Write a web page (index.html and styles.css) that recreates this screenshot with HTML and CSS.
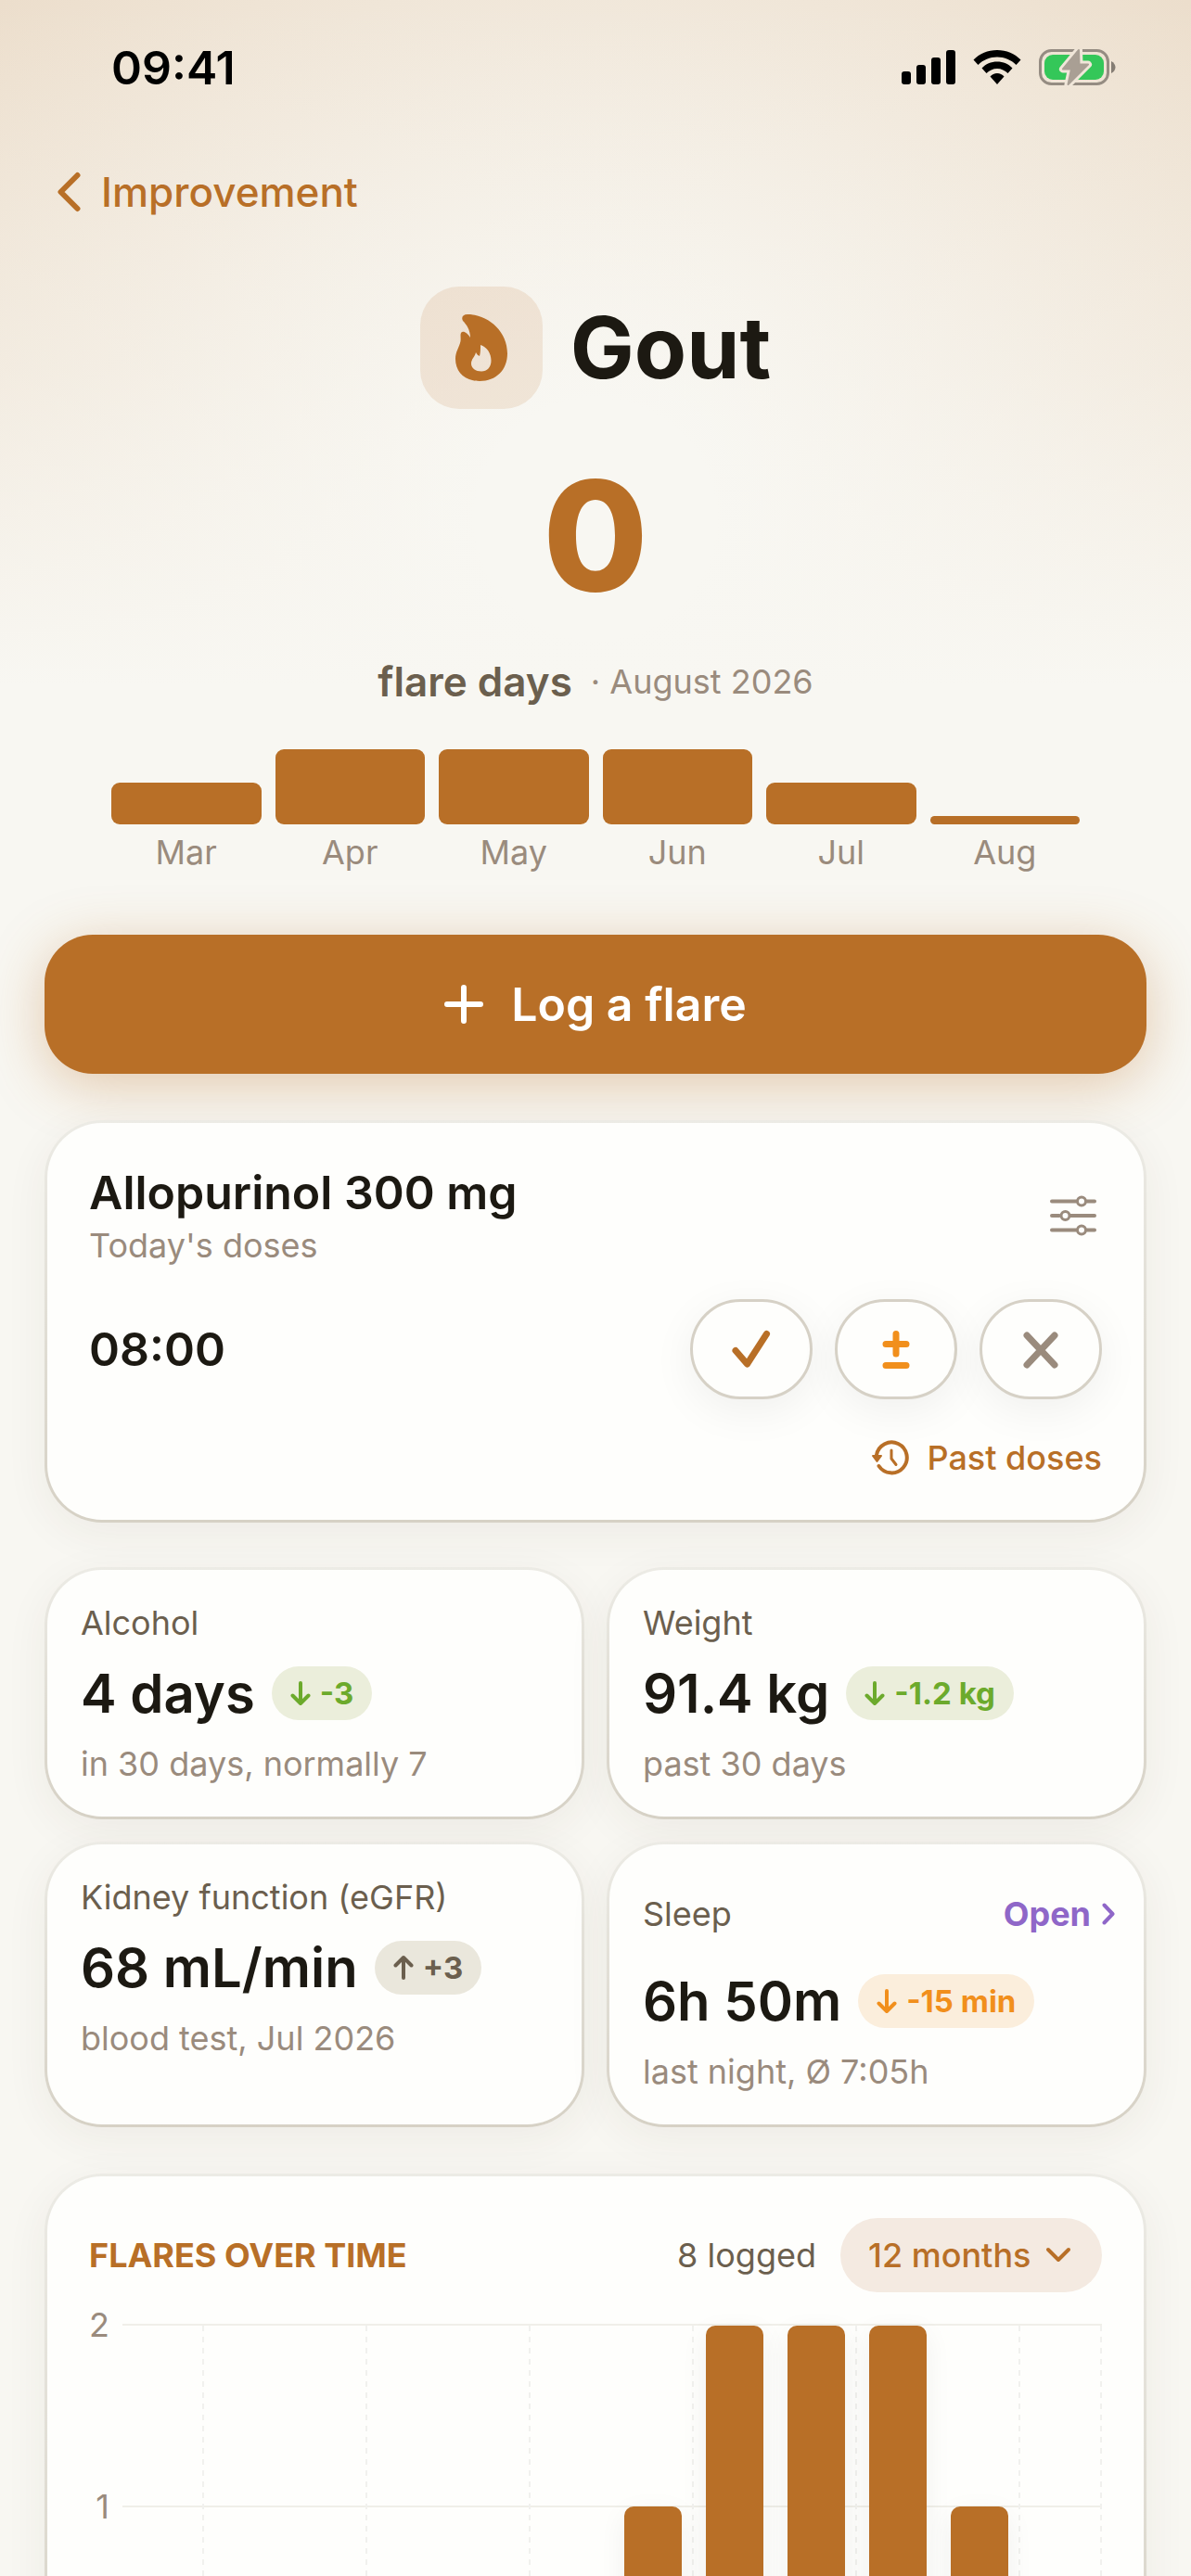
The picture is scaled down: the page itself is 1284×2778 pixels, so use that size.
FILE: index.html
```html
<!DOCTYPE html>
<html lang="en">
<head>
    <meta charset="UTF-8">
    <meta name="viewport" content="width=device-width, initial-scale=1.0">
    <title>Gout</title>
    <link rel="stylesheet" href="styles.css">
</head>
<body>
    <div class="screen">

        <div class="status-bar">
            <span class="status-time">09:41</span>
            <div class="status-icons">
                <svg width="58" height="38" viewBox="0 0 58 38" aria-hidden="true">
                    <rect x="0" y="23" width="10" height="14" rx="3"/>
                    <rect x="16" y="16" width="10" height="21" rx="3"/>
                    <rect x="32" y="8" width="10" height="29" rx="3"/>
                    <rect x="48" y="0" width="10" height="37" rx="3"/>
                </svg>
                <svg width="52" height="38" viewBox="0 0 52 38" aria-hidden="true">
                    <path d="M26 0C36 0 45 4 51.500 10.500L46.500 16C41 10.500 34 7.500 26 7.500S11 10.500 5.500 16L.5 10.500C7 4 16 0 26 0Z"/>
                    <path d="M26 12.500C32.500 12.500 38.500 15 42.500 19.500L37.500 25C34.500 22 30.500 20 26 20S17.500 22 14.500 25L9.500 19.500C13.500 15 19.500 12.500 26 12.500Z"/>
                    <path d="M26 25C29 25 31.500 26.500 33.500 28.500L26 37L18.500 28.500C20.500 26.500 23 25 26 25Z"/>
                </svg>
                <svg width="84" height="40" viewBox="0 0 84 40" aria-hidden="true">
                    <rect x="1.500" y="1.500" width="73" height="36" rx="12" fill="none" stroke="#958c82" stroke-width="3"/>
                    <rect x="6" y="6" width="64" height="27" rx="9" fill="#34c759"/>
                    <path d="M78 13C81 14.500 82.500 17 82.500 19.500S81 24.500 78 26Z" fill="#857d74"/>
                    <path d="M43 1L26 21.500H35L31.500 38L53 16.500H43.500Z" fill="#f0e6d9" stroke="#f0e6d9" stroke-width="8" stroke-linejoin="round"/>
                    <path d="M43 1L26 21.500H35L31.500 38L53 16.500H43.500Z" fill="#a99f94" stroke="#a99f94" stroke-width="2" stroke-linejoin="round"/>
                </svg>
            </div>
        </div>

        <nav class="nav">
            <a class="back" href="#">
                <svg width="27" height="44" viewBox="0 0 27 44" aria-hidden="true">
                    <path d="M23.500 4L5.500 22L23.500 40" fill="none" stroke="currentColor" stroke-width="6" stroke-linecap="round" stroke-linejoin="round"/>
                </svg>
                Improvement
            </a>
        </nav>

        <main>
            <header class="hero">
                <div class="title-row">
                    <span class="title-icon">
                        <svg width="56" height="72" viewBox="0 0 56 72" aria-hidden="true">
                            <path fill="currentColor" fill-rule="evenodd" d="M13 0C35 0 56 18 56 42C56 60 44 72 26 72C10 72 0 62 0 48C0 40 4 36 5.500 29C6 25 5 22 6 20C8 17 13 20 16 25C16 17 12 11 8 7C6 3 8 0 13 0ZM27 33C27 38 27 41 26 45C24 44 23 43 22 41C21 46 17 48 17 53C17 58 22 61.500 28 61.500C34 61.500 38.500 57 38.500 50C38.500 42 34 35 27 33Z"/>
                        </svg>
                    </span>
                    <h1>Gout</h1>
                </div>
                <p class="count">0</p>
                <p class="count-label"><strong>flare days</strong> <span>· August 2026</span></p>
                <div class="months">
                    <div class="mini"><i style="height: 45px"></i><span>Mar</span></div>
                    <div class="mini"><i style="height: 81px"></i><span>Apr</span></div>
                    <div class="mini"><i style="height: 81px"></i><span>May</span></div>
                    <div class="mini"><i style="height: 81px"></i><span>Jun</span></div>
                    <div class="mini"><i style="height: 45px"></i><span>Jul</span></div>
                    <div class="mini"><i style="height: 9px"></i><span>Aug</span></div>
                </div>
            </header>

            <button class="log-button" type="button">
                <svg width="42" height="42" viewBox="0 0 42 42" aria-hidden="true">
                    <path d="M21 3V39M3 21H39" stroke="currentColor" stroke-width="6" stroke-linecap="round"/>
                </svg>
                Log a flare
            </button>

            <section class="card meds">
                <div class="meds-head">
                    <div>
                        <h2>Allopurinol 300 mg</h2>
                        <p>Today's doses</p>
                    </div>
                    <button class="icon-button" type="button" aria-label="Dose settings">
                        <svg width="50" height="44" viewBox="0 0 50 44" fill="none" stroke="currentColor" stroke-width="4" stroke-linecap="round" aria-hidden="true">
                            <path d="M2 6.500H28M40 6.500H48M2 22H10M22 22H48M2 37.500H28M40 37.500H48"/>
                            <circle cx="34" cy="6.500" r="4.500" stroke-width="3"/>
                            <circle cx="16.500" cy="22" r="4.500" stroke-width="3"/>
                            <circle cx="34" cy="37.500" r="4.500" stroke-width="3"/>
                        </svg>
                    </button>
                </div>
                <div class="dose">
                    <time>08:00</time>
                    <div class="dose-actions">
                        <button class="taken" type="button" aria-label="Taken">
                            <svg width="42" height="42" viewBox="0 0 42 42" aria-hidden="true">
                                <path d="M4 22.500L16.500 37L37.500 4.500" fill="none" stroke="currentColor" stroke-width="7" stroke-linecap="round" stroke-linejoin="round"/>
                            </svg>
                        </button>
                        <button class="adjust" type="button" aria-label="Adjusted">
                            <svg width="42" height="42" viewBox="0 0 42 42" aria-hidden="true">
                                <path d="M21 4.500V26M10 15.500H32M10 38.500H32" fill="none" stroke="currentColor" stroke-width="7" stroke-linecap="round"/>
                            </svg>
                        </button>
                        <button class="skipped" type="button" aria-label="Skipped">
                            <svg width="42" height="42" viewBox="0 0 42 42" aria-hidden="true">
                                <path d="M6 6L36 38M36 6L6 38" fill="none" stroke="currentColor" stroke-width="7" stroke-linecap="round"/>
                            </svg>
                        </button>
                    </div>
                </div>
                <a class="past" href="#">
                    <svg width="42" height="38" viewBox="0 0 42 38" fill="none" stroke="currentColor" stroke-width="4" stroke-linecap="round" stroke-linejoin="round" aria-hidden="true">
                        <path d="M6 16A16.500 16.500 0 1 1 8.500 28"/>
                        <path d="M22 11V20L27 26.500" stroke-width="3"/>
                        <path d="M2 17H11L6.500 23Z" fill="currentColor" stroke-width="2"/>
                    </svg>
                    Past doses
                </a>
            </section>

            <section class="stats">
                <article class="card stat">
                    <h3>Alcohol</h3>
                    <div class="value">4 days
                        <span class="pill good">
                            <svg width="22" height="28" viewBox="0 0 22 28" aria-hidden="true"><path d="M11 3V25M2.500 16.500L11 25L19.500 16.500"/></svg>-3
                        </span>
                    </div>
                    <p>in 30 days, normally 7</p>
                </article>
                <article class="card stat">
                    <h3>Weight</h3>
                    <div class="value">91.4 kg
                        <span class="pill good">
                            <svg width="22" height="28" viewBox="0 0 22 28" aria-hidden="true"><path d="M11 3V25M2.500 16.500L11 25L19.500 16.500"/></svg>-1.2 kg
                        </span>
                    </div>
                    <p>past 30 days</p>
                </article>
                <article class="card stat">
                    <h3>Kidney function (eGFR)</h3>
                    <div class="value">68 mL/min
                        <span class="pill neutral">
                            <svg width="22" height="28" viewBox="0 0 22 28" aria-hidden="true"><path d="M11 25V3M2.500 11.500L11 3L19.500 11.500"/></svg>+3
                        </span>
                    </div>
                    <p>blood test, Jul 2026</p>
                </article>
                <article class="card stat">
                    <div class="stat-head">
                        <h3>Sleep</h3>
                        <a class="open" href="#">Open
                            <svg width="14" height="24" viewBox="0 0 14 24" aria-hidden="true">
                                <path d="M2.500 2.500L11.500 12L2.500 21.500" fill="none" stroke="currentColor" stroke-width="4" stroke-linecap="round" stroke-linejoin="round"/>
                            </svg>
                        </a>
                    </div>
                    <div class="value">6h 50m
                        <span class="pill warn">
                            <svg width="22" height="28" viewBox="0 0 22 28" aria-hidden="true"><path d="M11 3V25M2.500 16.500L11 25L19.500 16.500"/></svg>-15 min
                        </span>
                    </div>
                    <p>last night, Ø 7:05h</p>
                </article>
            </section>

            <section class="card chart-card">
                <div class="chart-head">
                    <h2>FLARES OVER TIME</h2>
                    <span class="logged">8 logged</span>
                    <div class="range">
                        <select aria-label="Time range">
                            <option>12 months</option>
                            <option>6 months</option>
                        </select>
                        <svg width="28" height="18" viewBox="0 0 28 18" aria-hidden="true">
                            <path d="M3 3L14 14L25 3" fill="none" stroke="currentColor" stroke-width="4" stroke-linecap="round" stroke-linejoin="round"/>
                        </svg>
                    </div>
                </div>
                <div class="chart">
                    <div class="axis"><span>2</span><span>1</span></div>
                    <div class="plot">
                        <div class="month"></div>
                        <div class="month"></div>
                        <div class="month"></div>
                        <div class="month"></div>
                        <div class="month"></div>
                        <div class="month"></div>
                        <div class="month"><i style="height: 50%"></i></div>
                        <div class="month"><i style="height: 100%"></i></div>
                        <div class="month"><i style="height: 100%"></i></div>
                        <div class="month"><i style="height: 100%"></i></div>
                        <div class="month"><i style="height: 50%"></i></div>
                        <div class="month"></div>
                    </div>
                </div>
            </section>
        </main>
    </div>
</body>
</html>
```

FILE: styles.css
```css
* {
    box-sizing: border-box;
}
body {
    margin: 0;
    font-family: Inter, "Liberation Sans", sans-serif;
    font-size: 36px;
    line-height: 44px;
    color: #1c1912;
    background-color: #f8f7f2;
}
h1, h2, h3, p {
    margin: 0;
}
a {
    text-decoration: none;
}
button, select {
    font-family: inherit;
    cursor: pointer;
}
svg {
    display: block;
    flex: none;
}

/* the page scrolls inside the screen, without a visible scrollbar */
.screen {
    height: 100vh;
    overflow-y: auto;
    scrollbar-width: none;
    background:
        linear-gradient(rgba(248, 247, 242, 0), rgba(248, 247, 242, 0.4) 400px, #f8f7f2 740px) no-repeat,
        radial-gradient(circle at 50% 560px, #f8f7f2 130px, #f1e8db 540px, #ecdecc 850px);
}

/* status bar */
.status-bar {
    display: flex;
    align-items: center;
    justify-content: space-between;
    height: 146px;
    padding: 0 80px 0 120px;
    color: #000;
}
.status-time {
    font-size: 50px;
    font-weight: 600;
}
.status-icons {
    display: flex;
    align-items: center;
    gap: 19px;
}

.nav {
    display: flex;
    align-items: center;
    height: 122px;
    padding: 0 60px;
}
.back {
    display: flex;
    align-items: center;
    gap: 22px;
    font-size: 44px;
    font-weight: 500;
    color: #b86f27;
}

main {
    padding: 41px 48px 48px;
}

/* hero */
.hero {
    text-align: center;
}
.title-row {
    display: flex;
    align-items: center;
    justify-content: center;
    gap: 30px;
}
.title-icon {
    display: flex;
    align-items: center;
    justify-content: center;
    width: 132px;
    height: 132px;
    border-radius: 42px;
    color: #b86f27;
    background-color: rgba(184, 111, 39, 0.13);
}
h1 {
    font-size: 92px;
    line-height: 120px;
    font-weight: 700;
}
.count {
    margin-top: 53px;
    font-size: 164px;
    line-height: 168px;
    font-weight: 800;
    color: #b86f27;
}
.count-label {
    display: flex;
    align-items: center;
    justify-content: center;
    gap: 20px;
    margin-top: 46px;
    line-height: 54px;
    color: #9a8b7d;
}
.count-label strong {
    font-size: 44px;
    font-weight: 600;
    color: #6b5f4e;
}
.months {
    display: grid;
    grid-template-columns: repeat(6, 1fr);
    gap: 15px;
    margin: 46px 72px 0;
    color: #9a8b7d;
}
.mini {
    display: flex;
    flex-direction: column;
    justify-content: flex-end;
    gap: 8px;
}
.mini i {
    border-radius: 9px;
    background-color: #b86f27;
}

.log-button {
    display: flex;
    align-items: center;
    justify-content: center;
    gap: 30px;
    width: 100%;
    height: 150px;
    margin: 67px 0 50px;
    border: 0;
    border-radius: 52px;
    font-size: 50px;
    font-weight: 600;
    color: #fff;
    background-color: #b86f27;
    box-shadow: 0 12px 60px rgba(184, 111, 39, 0.34);
}

/* cards */
.card {
    border: 3px solid transparent;
    border-radius: 62px;
    background:
        linear-gradient(#fefefc, #fefefc) padding-box,
        linear-gradient(#ecebe5, #d6d1c5) border-box;
    box-shadow: 0 12px 48px rgba(60, 50, 30, 0.06);
}
.meds {
    margin-bottom: 48px;
    padding: 45px;
}
.meds-head {
    display: flex;
    align-items: center;
    justify-content: space-between;
}
.meds h2 {
    font-size: 50px;
    line-height: 60px;
    font-weight: 600;
}
.meds p {
    margin-top: 5px;
    color: #9a8b7d;
}
.icon-button {
    padding: 6px;
    border: 0;
    color: #9a8b7d;
    background: none;
}
.dose {
    display: flex;
    align-items: center;
    justify-content: space-between;
    margin: 36px 0 41px;
}
.dose time {
    font-size: 50px;
    font-weight: 600;
}
.dose-actions {
    display: flex;
    gap: 24px;
}
.dose-actions button {
    display: flex;
    align-items: center;
    justify-content: center;
    width: 132px;
    height: 108px;
    padding: 0;
    border: 3px solid #d6d1c6;
    border-radius: 54px;
    background-color: #fefefc;
    box-shadow: 0 12px 48px rgba(0, 0, 0, 0.06);
}
.dose-actions .taken {
    color: #b86f27;
}
.dose-actions .adjust {
    color: #f18f1c;
}
.dose-actions .skipped {
    color: #9a8b7d;
}
.past {
    display: flex;
    align-items: center;
    justify-content: flex-end;
    gap: 18px;
    font-weight: 500;
    color: #b86f27;
}

/* stat tiles */
.stats {
    display: grid;
    grid-template-columns: 1fr 1fr;
    gap: 24px;
    margin-bottom: 50px;
}
.stat {
    padding: 35px 31px 35px 36px;
}
.stat h3 {
    font-size: 36px;
    font-weight: 400;
    color: #6b5f4e;
}
.stat-head {
    display: flex;
    align-items: center;
    justify-content: space-between;
    height: 80px;
}
.open {
    display: flex;
    align-items: center;
    gap: 12px;
    font-weight: 700;
    color: #8f67c8;
}
.value {
    display: flex;
    align-items: center;
    gap: 18px;
    height: 72px;
    margin: 18px 0;
    font-size: 58px;
    font-weight: 600;
    white-space: nowrap;
}
.stat p {
    color: #9a8b7d;
}
.pill {
    display: flex;
    align-items: center;
    gap: 10px;
    height: 58px;
    padding: 0 20px;
    border-radius: 29px;
    font-size: 33px;
    font-weight: 700;
}
.pill svg {
    fill: none;
    stroke: currentColor;
    stroke-width: 4px;
    stroke-linecap: round;
    stroke-linejoin: round;
}
.good {
    color: #6caa2c;
    background-color: #ebeedb;
}
.neutral {
    color: #6b5f4e;
    background-color: #eae7dc;
}
.warn {
    color: #f18f1c;
    background-color: #fbeedc;
}

/* chart */
.chart-card {
    padding: 45px;
}
.chart-head {
    display: flex;
    align-items: center;
}
.chart-head h2 {
    flex: 1;
    font-size: 36px;
    font-weight: 700;
    color: #b86f27;
}
.logged {
    margin-right: 26px;
    color: #6b5f4e;
}
.range {
    position: relative;
    color: #b86f27;
}
.range select {
    appearance: none;
    height: 80px;
    padding: 0 76px 0 30px;
    border: 0;
    border-radius: 40px;
    font-size: 36px;
    font-weight: 500;
    color: inherit;
    background-color: #f4eae1;
}
.range svg {
    position: absolute;
    top: 31px;
    right: 33px;
    pointer-events: none;
}
.chart {
    display: flex;
    gap: 14px;
    margin-top: 34px;
}
.axis {
    display: flex;
    flex-direction: column;
    gap: 152px;
    width: 22px;
    margin-top: -21px;
    text-align: right;
    color: #9a8b7d;
}
.plot {
    flex: 1;
    display: grid;
    grid-template-columns: repeat(12, 1fr);
    height: 394px;
    border-top: 2px solid #f0efe9;
    border-bottom: 2px solid #f0efe9;
    background: linear-gradient(#f0efe9, #f0efe9) 0 50% / 100% 2px no-repeat;
}
.month {
    display: flex;
    align-items: flex-end;
    justify-content: center;
}
.month:nth-child(odd), .month:last-child {
    background: repeating-linear-gradient(#f1f1ee 0 6px, transparent 6px 12px) 100% 0 / 2px 100% no-repeat;
}
.month i {
    width: 70%;
    border-radius: 10px 10px 0 0;
    background-color: #b86f27;
    box-shadow: 0 8px 30px rgba(0, 0, 0, 0.06);
}
```
